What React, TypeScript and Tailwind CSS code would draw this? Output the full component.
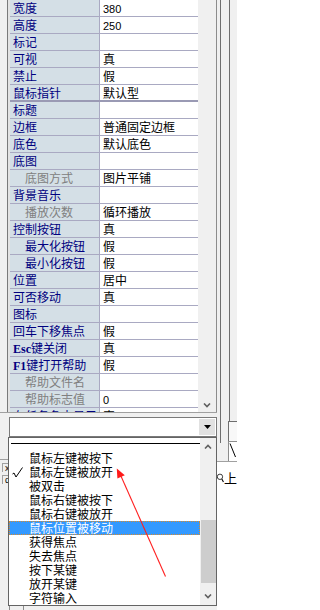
type Kind = "n" | "g" | "s";

const props: { n: string; v?: string; k?: Kind; thick?: boolean }[] = [
  { n: "宽度", v: "380" },
  { n: "高度", v: "250" },
  { n: "标记" },
  { n: "可视", v: "真" },
  { n: "禁止", v: "假" },
  { n: "鼠标指针", v: "默认型", thick: true },
  { n: "标题" },
  { n: "边框", v: "普通固定边框" },
  { n: "底色", v: "默认底色" },
  { n: "底图" },
  { n: "底图方式", v: "图片平铺", k: "g" },
  { n: "背景音乐" },
  { n: "播放次数", v: "循环播放", k: "g" },
  { n: "控制按钮", v: "真" },
  { n: "最大化按钮", v: "假", k: "s" },
  { n: "最小化按钮", v: "假", k: "s" },
  { n: "位置", v: "居中" },
  { n: "可否移动", v: "真" },
  { n: "图标" },
  { n: "回车下移焦点", v: "假" },
  { n: "Esc键关闭", v: "真" },
  { n: "F1键打开帮助", v: "假" },
  { n: "帮助文件名", k: "g" },
  { n: "帮助标志值", v: "0", k: "g" },
  { n: "在任务条中显示", v: "真" },
];

const events = [
  "鼠标左键被按下",
  "鼠标左键被放开",
  "被双击",
  "鼠标右键被按下",
  "鼠标右键被放开",
  "鼠标位置被移动",
  "获得焦点",
  "失去焦点",
  "按下某键",
  "放开某键",
  "字符输入",
];

function Chevron({ up }: { up?: boolean }) {
  return (
    <svg width="8" height="5" viewBox="0 0 8 5">
      <polyline
        points={up ? "1,4.5 4,1.5 7,4.5" : "1,0.5 4,3.5 7,0.5"}
        fill="none"
        stroke="#606060"
        strokeWidth="1.6"
      />
    </svg>
  );
}

function Name({ t }: { t: string }) {
  const m = t.match(/^([A-Za-z0-9]+)(.*)$/);
  if (!m) return <>{t}</>;
  return (
    <>
      <span className="font-bold font-[family-name:'Liberation_Serif',serif]">{m[1]}</span>
      {m[2]}
    </>
  );
}

function Value({ v }: { v?: string }) {
  if (!v) return null;
  if (/^[0-9]+$/.test(v))
    return <span className="text-[11px] font-[family-name:'Liberation_Sans',sans-serif]">{v}</span>;
  return <>{v}</>;
}

function PropRow({ p }: { p: (typeof props)[number] }) {
  const indent = p.k === "g" || p.k === "s";
  return (
    <div
      className={`flex h-[17px] shrink-0 ${p.thick ? "border-b-2 border-[#9a9ab4]" : "border-b border-[#a9a9c2]"}`}
    >
      <div
        className={`w-[90px] shrink-0 overflow-hidden whitespace-nowrap border-r border-[#a9a9c2] bg-[#d4dfe6] leading-[16px] ${indent ? "pl-[15px]" : "pl-[3px]"} ${p.k === "g" ? "text-[#808080]" : "text-[#000080]"}`}
      >
        <Name t={p.n} />
      </div>
      <div className="flex-1 whitespace-nowrap bg-white pl-[3px] leading-[16px] text-black">
        <Value v={p.v} />
      </div>
    </div>
  );
}

export default function App() {
  return (
    <div className="relative flex h-[610px] w-[237px] overflow-hidden bg-[#f0f0f0] text-[12px] font-[family-name:'Noto_Sans_CJK_SC',sans-serif]">
      {/* main column */}
      <div className="flex w-[217px] shrink-0 flex-col">
        {/* property grid */}
        <div className="flex h-[413px] shrink-0 border-b border-[#a0a0a0]">
          <div className="w-[7px]" />
          <div className="w-[1px] bg-[#7a7a7a]" />
          <div className="w-[2px] bg-[#e3e3e3]" />
          <div className="flex w-[188px] flex-col overflow-hidden">
            {props.map((p) => (
              <PropRow key={p.n} p={p} />
            ))}
          </div>
          <div className="flex w-[18px] flex-col items-center justify-end bg-[#f0f0f0] pb-[4px]">
            <Chevron />
          </div>
          <div className="w-[1px] bg-[#8c8c8c]" />
        </div>

        {/* event combobox */}
        <div className="flex h-[24px] shrink-0 pl-[9px] pt-[4px]">
          <div className="flex h-[20px] w-[208px] justify-end border border-[#7a7a7a] bg-white p-[1px]">
            <div className="flex w-[16px] items-center justify-center bg-[#e1e1e1]">
              <svg width="7" height="4" viewBox="0 0 7 4">
                <polygon points="0,0 7,0 3.5,4" fill="#000" />
              </svg>
            </div>
          </div>
        </div>

        {/* content under the open list */}
        <div className="flex flex-1 flex-col">
          <div className="h-[22px]" />
          <div className="h-[1px] bg-[#a0a0a0]" />
          <div className="h-[3px]" />
          <div className="ml-[2px] h-[9px] w-[6px] border-l border-t border-[#a0a0a0] pl-[2px] text-[9px] leading-[8px] font-[family-name:'Liberation_Sans',sans-serif]">
            x
          </div>
          <div className="h-[3px]" />
          <div className="ml-[2px] h-[9px] w-[6px] border-l border-t border-[#a0a0a0] pl-[2px] text-[9px] leading-[8px] font-[family-name:'Liberation_Sans',sans-serif]">
            d
          </div>
          <div className="flex-1" />
          <div className="flex h-[4px]">
            <div className="ml-[9px] w-[1px] bg-[#8c8c8c]" />
            <div className="ml-[13px] w-[1px] bg-[#8c8c8c]" />
          </div>
        </div>
      </div>

      {/* right edge of neighbouring panels */}
      <div className="flex w-[20px] shrink-0 flex-col">
        <div className="flex h-[421px] shrink-0">
          <div className="w-[3px]" />
          <div className="w-[1px] bg-[#6e6e6e]" />
          <div className="w-[8px]" />
          <div className="w-[1px] bg-[#6e6e6e]" />
        </div>
        <div className="flex h-[40px] shrink-0">
          <div className="w-[3px]" />
          <div className="h-[22px] w-[1px] bg-[#6e6e6e]" />
          <div className="w-[7px]" />
          <div className="flex flex-1 flex-col">
            <div className="h-[20px] border-l border-t border-[#6e6e6e] bg-[#f8f8f8]" />
            <div className="h-[20px] border-l border-t border-[#8c8c8c] bg-white">
              <svg width="8" height="16" viewBox="0 0 8 16">
                <line x1="1" y1="1.5" x2="6.5" y2="15" stroke="#000" strokeWidth="1" />
              </svg>
            </div>
          </div>
        </div>
        <div className="h-[1px] shrink-0 bg-[#a0a0a0]" />
        <div className="flex h-[28px] shrink-0 bg-white">
          <svg width="13" height="28" viewBox="0 0 13 28">
            <circle cx="5.5" cy="15.5" r="5" fill="none" stroke="#000" strokeWidth="1.4" />
            <line x1="9" y1="19.5" x2="12" y2="25" stroke="#000" strokeWidth="2" />
          </svg>
          <div className="pt-[9px] text-[13px] leading-[14px] text-black">上</div>
        </div>
        <div className="flex-1 bg-white" />
      </div>

      {/* open dropdown list */}
      <div className="absolute left-[8px] top-[437px] flex h-[169px] w-[209px] border border-[#646464] bg-white">
        <div className="flex flex-1 flex-col">
          <div className="ml-[2px] mt-[5px] h-[1px] bg-black" />
          <div className="mt-[7px] flex flex-col">
            {events.map((e, i) => {
              const sel = i === 5;
              return (
                <div
                  key={e}
                  className={`flex h-[14px] items-center whitespace-nowrap leading-[14px] ${sel ? "border border-dotted border-[#d98a2c] bg-[#3399ff] text-white" : "text-black"}`}
                >
                  <div className={`flex shrink-0 items-center ${sel ? "w-[19px]" : "w-[20px]"}`}>
                    {i === 1 && (
                      <svg className="ml-[3px]" width="11" height="11" viewBox="0 0 11 11">
                        <polyline
                          points="0.5,7 2,6 4,10 10.5,0.5"
                          fill="none"
                          stroke="#000"
                          strokeWidth="1"
                        />
                      </svg>
                    )}
                  </div>
                  {e}
                </div>
              );
            })}
          </div>
        </div>
        <div className="flex w-[16px] flex-col bg-[#f0f0f0]">
          <div className="flex h-[17px] items-center justify-center">
            <Chevron up />
          </div>
          <div className="flex-1 pt-[65px]">
            <div className="ml-[1px] h-[63px] bg-[#cdcdcd]" />
          </div>
          <div className="flex h-[17px] items-center justify-center">
            <Chevron />
          </div>
        </div>
      </div>

      {/* red annotation arrow */}
      <svg
        className="pointer-events-none absolute left-0 top-0"
        width="237"
        height="610"
        viewBox="0 0 237 610"
      >
        <line x1="165.5" y1="576.5" x2="120.5" y2="475" stroke="#ff1f1f" strokeWidth="1.1" />
        <polygon points="116.8,468.5 117.4,478.6 124.8,475.2" fill="#ff1a1a" />
      </svg>
    </div>
  );
}
